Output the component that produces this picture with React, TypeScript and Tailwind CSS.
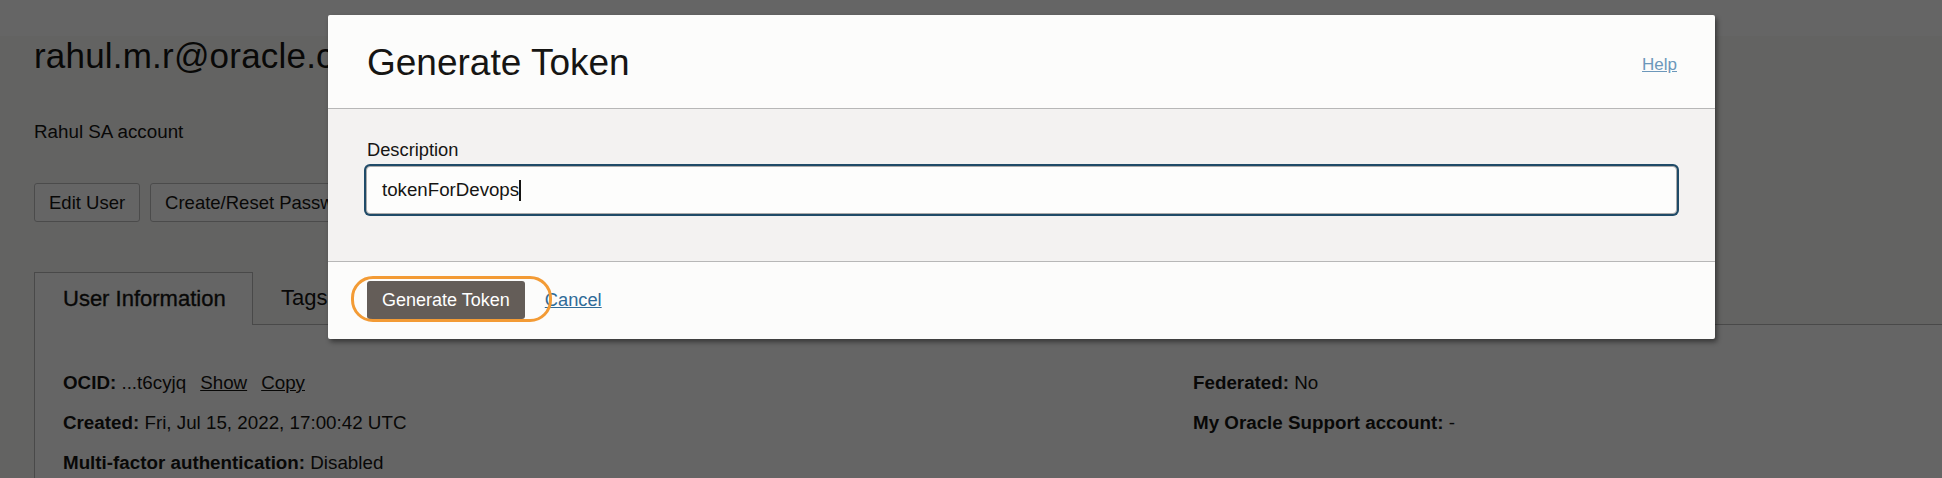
import React from 'react'

// ── Page behind the dialog ────────────────────────────────────────────────────
function InfoRow({ label, children }: { label: string; children?: React.ReactNode }) {
  return (
    <div className="h-[40px] leading-[40px] whitespace-nowrap">
      <span className="font-bold">{label}</span> {children}
    </div>
  )
}

function UserPage() {
  return (
    <div className="h-full bg-[#f9f9f8]">
      <div className="pl-[34px]">
        <h1 className="mt-[36px] text-[35px] leading-[40px] tracking-[0.2px] whitespace-nowrap">
          rahul.m.r@oracle.com
        </h1>
        <p className="mt-[44px] text-[18.8px] leading-[24px]">Rahul SA account</p>
        <div className="mt-[39px] flex gap-[10px]">
          <button className="h-[39px] px-[14px] border border-[#bdbdbd] rounded-[3px] bg-white text-[18.5px]">
            Edit User
          </button>
          <button className="h-[39px] px-[14px] border border-[#bdbdbd] rounded-[3px] bg-white text-[18.5px] whitespace-nowrap">
            Create/Reset Password
          </button>
        </div>
      </div>

      {/* ── Tabs ── */}
      <div className="mt-[50px] flex pl-[34px] h-[53px]">
        <div className="w-[219px] h-[53px] border border-b-0 border-[#b8b8b8] bg-white pl-[28px] text-[22px] leading-[52px] [-webkit-text-stroke:0.35px]">
          User Information
        </div>
        <div className="flex-1 border-b border-[#b8b8b8] pl-[28px] text-[22px] leading-[52px]">
          Tags
        </div>
      </div>

      {/* ── Panel ── */}
      <div className="ml-[34px] h-[200px] border-l border-[#b8b8b8] bg-white pl-[28px] pt-[38px] text-[18.8px]">
        <div className="grid grid-cols-[1130px_1fr]">
          <div>
            <InfoRow label="OCID:">
              ...t6cyjq
              <span className="ml-[14px] underline">Show</span>
              <span className="ml-[14px] underline">Copy</span>
            </InfoRow>
            <InfoRow label="Created:">Fri, Jul 15, 2022, 17:00:42 UTC</InfoRow>
            <InfoRow label="Multi-factor authentication:">Disabled</InfoRow>
          </div>
          <div>
            <InfoRow label="Federated:">No</InfoRow>
            <InfoRow label="My Oracle Support account:">-</InfoRow>
          </div>
        </div>
      </div>
    </div>
  )
}

// ── Dialog ────────────────────────────────────────────────────────────────────
function GenerateTokenDialog() {
  return (
    <div className="absolute left-[328px] top-[15px] w-[1387px] h-[324px] flex flex-col bg-[#fcfcfb] rounded-[2px] shadow-[2px_3px_5px_rgba(0,0,0,0.45)]">
      <div className="h-[94px] shrink-0 flex justify-between items-start border-b border-[#b7b7b7] pl-[39px] pr-[38px]">
        <h2 className="mt-[26px] text-[37px] leading-[44px] text-[#161513]">
          Generate Token
        </h2>
        <a className="mt-[40px] text-[17px] leading-[20px] text-[#6c97ba] underline">Help</a>
      </div>

      <div className="h-[152px] shrink-0 bg-[#f3f2f1] pl-[38px] pr-[38px] pt-[30px]">
        <label className="block ml-[1px] text-[18.3px] leading-[22px] text-[#161513]">Description</label>
        <div className="mt-[5px] h-[48px] flex items-center border border-[#ababab] rounded-[4px] bg-[#fdfdfc] pl-[15px] shadow-[0_0_0_2px_#1f4b68] text-[18.7px] text-[#161513]">
          <span>tokenForDevops</span>
          <span className="w-[2px] h-[21px] bg-[#161513]" />
        </div>
      </div>

      <div className="relative flex-1 border-t border-[#b7b7b7] pl-[39px] pt-[19px]">
        <div className="flex items-center gap-[20px]">
          <button className="h-[38px] px-[15px] rounded-[3px] bg-[#645d58] text-[18px] text-white whitespace-nowrap">
            Generate Token
          </button>
          <a className="text-[18.3px] text-[#2f6b98] underline">Cancel</a>
        </div>
        {/* annotation ring round the button */}
        <div className="absolute left-[23px] top-[14px] w-[201px] h-[46px] border-[3px] border-[#f39b35] rounded-[22px] pointer-events-none" />
      </div>
    </div>
  )
}

export default function App() {
  return (
    <div className="relative h-[478px] w-full overflow-hidden bg-white font-['Liberation_Sans',Arial,sans-serif] text-[#161513]">
      <UserPage />
      <div className="absolute inset-0 bg-[rgba(0,0,0,0.605)]" />
      <GenerateTokenDialog />
    </div>
  )
}
